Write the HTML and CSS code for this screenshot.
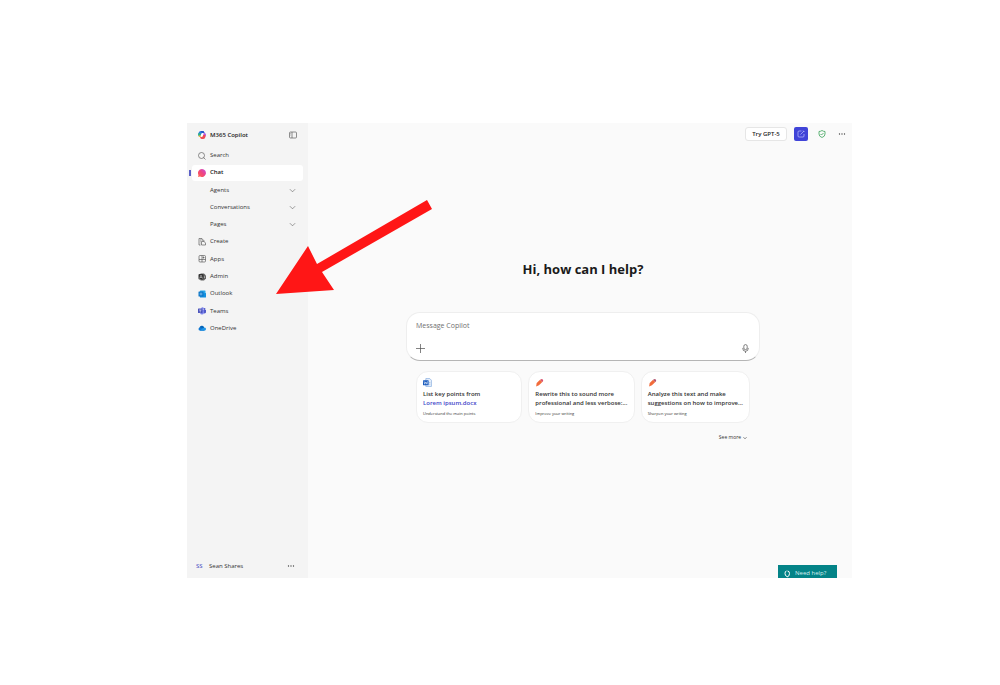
FILE: index.html
```html
<!DOCTYPE html>
<html lang="en">
  <head>
    <meta charset="utf-8">
    <title>M365 Copilot</title>
    <link rel="stylesheet" href="styles.css">
  </head>
  <body>
    <div class="app">
      <aside class="sidebar">
        <div class="brand">
          <svg class="icon" viewBox="0 0 16 16">
            <path d="M1 4q1-4 5-4h4q2 0 3 4H8L6 9H2Q0 8 1 4z" fill="#2a7de1"/>
            <path d="M5 0h5q2 0 3 4H8z" fill="#2453c9"/>
            <path d="M0 7q0-2 1-3l5 1-1 6H3Q0 11 0 7z" fill="#2fb08f"/>
            <path d="M1 9h4l2 3H4Q1 12 1 9z" fill="#f0b43a"/>
            <path d="M11 4h2q4 1 3 5l-2 3-4-1z" fill="#b558d8"/>
            <path d="M14 8q2 3 0 6-1 2-4 2H7q-2 0-3-4h4l2-4z" fill="#ee4b52"/>
            <path d="M7 5h4l-2 6H5z" fill="#fff"/>
          </svg>
          <span class="brand-name">M365 Copilot</span>
          <button class="icon-button" aria-label="Collapse sidebar">
            <svg class="icon line" viewBox="0 0 16 16"><rect x="1" y="2" width="14" height="12" rx="2"/><path d="M6 2v12M3 5h1M3 8h1"/></svg>
          </button>
        </div>
        <nav class="nav">
          <a class="nav-item" href="#">
            <svg class="icon line" viewBox="0 0 16 16"><circle cx="7" cy="7" r="6"/><path d="M11 11l4 4"/></svg>
            <span>Search</span>
          </a>
          <a class="nav-item active" href="#">
            <svg class="icon" viewBox="0 0 16 16">
              <defs><linearGradient id="chat" x1="0" y1="1" x2="1" y2="0"><stop offset="0" stop-color="#ff6a4d"/><stop offset=".5" stop-color="#f0457f"/><stop offset="1" stop-color="#c44be0"/></linearGradient></defs>
              <path d="M8 0a8 8 0 1 1-4 15l-4 1 1-4A8 8 0 0 1 8 0z" fill="url(#chat)"/>
            </svg>
            <span>Chat</span>
          </a>
          <a class="nav-item sub" href="#">
            <span>Agents</span>
            <svg class="chevron line" viewBox="0 0 16 16"><path d="M2 5l6 6 6-6"/></svg>
          </a>
          <a class="nav-item sub" href="#">
            <span>Conversations</span>
            <svg class="chevron line" viewBox="0 0 16 16"><path d="M2 5l6 6 6-6"/></svg>
          </a>
          <a class="nav-item sub" href="#">
            <span>Pages</span>
            <svg class="chevron line" viewBox="0 0 16 16"><path d="M2 5l6 6 6-6"/></svg>
          </a>
          <a class="nav-item" href="#">
            <svg class="icon line" viewBox="0 0 16 16"><path d="M5 14H2V1h6v4M4 4h2M4 7h1M4 10h1"/><path d="M7 7h5l3 3v4H7zM8 4h3l2 3"/></svg>
            <span>Create</span>
          </a>
          <a class="nav-item" href="#">
            <svg class="icon line" viewBox="0 0 16 16"><rect x="2" y="1" width="13" height="13" rx="2"/><path d="M2 9h13M8 1v13M11 3v4M9 5h4"/></svg>
            <span>Apps</span>
          </a>
          <a class="nav-item" href="#">
            <svg class="icon" viewBox="0 0 16 16"><path d="M5 1h7l4 4v6l-4 4H5z" fill="#666"/><rect x="1" y="2" width="10" height="11" rx="2" fill="#333"/><path d="M3 11l3-7 3 7M4 9h4" stroke="#ddd" fill="none"/><circle cx="13" cy="8" r="1" fill="#fff"/></svg>
            <span>Admin</span>
          </a>
          <a class="nav-item" href="#">
            <svg class="icon" viewBox="0 0 16 16"><rect x="4" y="1" width="11" height="10" rx="1" fill="#28a8ea"/><path d="M3 8l13-2v8q0 1-1 1H4z" fill="#1490df"/><rect x="1" y="3" width="10" height="10" rx="1" fill="#0f78c8"/><circle cx="6" cy="8" r="2" fill="none" stroke="#bfe3fa"/></svg>
            <span>Outlook</span>
          </a>
          <a class="nav-item" href="#">
            <svg class="icon" viewBox="0 0 16 16"><circle cx="13" cy="4" r="2" fill="#5059c9"/><circle cx="9" cy="3" r="2.500" fill="#7b83eb"/><path d="M11 6h5v5q-1 2-4 2z" fill="#5059c9"/><path d="M5 6h7v6q-1 3-4 3t-4-3z" fill="#7b83eb"/><rect y="3" width="9" height="9" rx="1" fill="#4b53bc"/><path d="M2 6h5M4.500 6v5" stroke="#fff"/></svg>
            <span>Teams</span>
          </a>
          <a class="nav-item" href="#">
            <svg class="icon" viewBox="0 0 16 16"><path d="M3 7a5 5 0 0 1 9-1l1 7H4z" fill="#0364b8"/><path d="M4 13a3 3 0 0 1 0-6q3 0 5 2l4 4z" fill="#0f78d4"/><path d="M4 13l6-5q6-3 6 2 0 3-3 3z" fill="#1f96e8"/></svg>
            <span>OneDrive</span>
          </a>
        </nav>
        <div class="account">
          <span class="initials">SS</span>
          <span class="account-name">Sean Shares</span>
          <button class="icon-button" aria-label="Account options">
            <svg class="icon dots" viewBox="0 0 16 16"><circle cx="3" cy="8" r="1.300"/><circle cx="8" cy="8" r="1.300"/><circle cx="13" cy="8" r="1.300"/></svg>
          </button>
        </div>
      </aside>

      <main class="main">
        <header class="topbar">
          <button class="try">Try GPT-5</button>
          <button class="new-chat" aria-label="New chat">
            <svg class="icon line" viewBox="0 0 16 16"><path d="M9 2H4Q2 2 2 4v8q0 2 2 2h8q2 0 2-2V8M7 9l7-7M12 1l3 3"/></svg>
          </button>
          <button class="icon-button" aria-label="Protected">
            <svg class="icon shield" viewBox="0 0 16 16"><path d="M8 1q3 2 6 2v5q0 5-6 7-6-2-6-7V3q3 0 6-2z"/><path d="M5 8l2 2 4-4"/></svg>
          </button>
          <button class="icon-button" aria-label="More options">
            <svg class="icon dots" viewBox="0 0 16 16"><circle cx="3" cy="8" r="1.300"/><circle cx="8" cy="8" r="1.300"/><circle cx="13" cy="8" r="1.300"/></svg>
          </button>
        </header>

        <section class="content">
          <h1>Hi, how can I help?</h1>
          <form class="composer">
            <input type="text" placeholder="Message Copilot" aria-label="Message Copilot">
            <div class="composer-tools">
              <button type="button" class="icon-button" aria-label="Add content">
                <svg class="tool line" viewBox="0 0 16 16"><path d="M8 0v16M0 8h16"/></svg>
              </button>
              <button type="button" class="icon-button" aria-label="Dictate">
                <svg class="tool line" viewBox="0 0 16 16"><rect x="5" y="1" width="6" height="9" rx="3"/><path d="M3 7q0 6 5 6t5-6M8 13v3"/></svg>
              </button>
            </div>
          </form>
          <div class="cards">
            <a class="card" href="#">
              <svg class="card-icon" viewBox="0 0 16 16"><path d="M5 1h7l3 3v11H5z" fill="#e8f0fb" stroke="#6d9bd8"/><path d="M11 8h2M11 11h2" stroke="#6d9bd8"/><rect y="4" width="10" height="9" rx="1" fill="#185abd"/><path d="M2 6l1 5 2-4 2 4 1-5" fill="none" stroke="#fff"/></svg>
              <strong>List key points from<br><span class="file">Lorem ipsum.docx</span></strong>
              <small>Understand the main points</small>
            </a>
            <a class="card" href="#">
              <svg class="card-icon" viewBox="0 0 16 16"><path d="M3 9l6-6 4 4-6 6-5 2z" fill="#f26b3a"/><path d="M9 3l2-1q2-1 3 1t0 3l-1 1z" fill="#d9506c"/></svg>
              <strong>Rewrite this to sound more<br>professional and less verbose:...</strong>
              <small>Improve your writing</small>
            </a>
            <a class="card" href="#">
              <svg class="card-icon" viewBox="0 0 16 16"><path d="M3 9l6-6 4 4-6 6-5 2z" fill="#f26b3a"/><path d="M9 3l2-1q2-1 3 1t0 3l-1 1z" fill="#b0506c"/></svg>
              <strong>Analyze this text and make<br>suggestions on how to improve...</strong>
              <small>Sharpen your writing</small>
            </a>
          </div>
          <button class="see-more">See more
            <svg class="line" viewBox="0 0 16 16"><path d="M2 5l6 6 6-6"/></svg>
          </button>
        </section>

        <button class="help">
          <svg class="icon" viewBox="0 0 16 16"><path d="M7 2Q4 2 4 7t4 6M9 2q4 0 4 5 0 6-5 7" fill="none" stroke="#fff" stroke-width="2"/></svg>
          Need help?
        </button>
      </main>

      <svg class="arrow" viewBox="0 0 156 95"><path d="M0 94L32 46l9 18L151 0l5 9L46 72l12 18z"/></svg>
    </div>
  </body>
</html>
```

FILE: styles.css
```css
* {
  box-sizing: border-box;
}
body {
  margin: 0;
  padding: 123px 148px 107px 187px;
  background: #fff;
  color: #333;
  font-family: "Open Sans", "Noto Sans", sans-serif;
  font-size: 6px;
  line-height: 9px;
}
button {
  padding: 0;
  border: 0;
  background: none;
  color: inherit;
  font: inherit;
}
a {
  color: inherit;
  text-decoration: none;
}
svg {
  display: block;
  flex: none;
}
.app {
  position: relative;
  display: flex;
  min-height: calc(100vh - 230px);
}
.icon {
  width: 8px;
  height: 8px;
}
.line {
  fill: none;
  stroke: #555;
  stroke-width: 1.3;
}
.dots {
  fill: #444;
}

/* sidebar */
.sidebar {
  display: flex;
  flex-direction: column;
  flex: none;
  width: 121px;
  padding: 0 5px;
  background: #f4f4f4;
}
.brand,
.account {
  display: flex;
  align-items: center;
  height: 24px;
  padding: 0 6px;
}
.brand-name {
  flex: 1;
  margin-left: 4px;
  color: #222;
  font-weight: 600;
}
.nav {
  display: grid;
  grid-auto-rows: 1fr;
  height: 190px;
}
.nav-item {
  position: relative;
  display: flex;
  align-items: center;
  gap: 4px;
  margin: 1px 0;
  padding: 0 6px;
  border-radius: 3px;
}
.nav-item.sub {
  justify-content: space-between;
  padding: 0 7px 0 18px;
}
.nav-item.active {
  background: #fff;
  color: #222;
  font-weight: 600;
}
.nav-item.active::before {
  content: "";
  position: absolute;
  left: -3px;
  width: 2px;
  height: 6px;
  background: #5b5fc7;
}
.chevron {
  width: 7px;
  height: 7px;
}
.account {
  margin-top: auto;
  padding: 0 8px 0 4px;
}
.initials {
  width: 13px;
  color: #5b5fc7;
  font-weight: 600;
}
.account-name {
  flex: 1;
}

/* main */
.main {
  position: relative;
  flex: 1;
  overflow: hidden;
  padding-left: 6px;
  background: #fafafa;
}
.topbar {
  display: flex;
  align-items: center;
  justify-content: flex-end;
  height: 22px;
  padding-right: 6px;
}
.try {
  width: 42px;
  height: 14px;
  margin-right: 7px;
  border: 1px solid #e6e6e6;
  border-radius: 3px;
  background: #fff;
  color: #222;
  font-weight: 600;
}
.new-chat {
  display: grid;
  place-items: center;
  width: 14px;
  height: 14px;
  margin-right: 10px;
  border-radius: 2px;
  background: #4044d8;
}
.new-chat .line {
  stroke: #c9cbff;
}
.topbar .icon-button + .icon-button {
  margin-left: 12px;
}
.shield {
  fill: none;
  stroke: #2f9e4f;
  stroke-width: 1.5;
}
.content {
  width: 354px;
  max-width: 100%;
  margin: 114px auto 0;
}
h1 {
  margin: 0 0 33px;
  color: #1a1a1a;
  font-size: 13px;
  font-weight: 700;
  line-height: 20px;
  text-align: center;
}
.composer {
  height: 49px;
  padding: 7px 9px;
  border: 1px solid #eee;
  border-bottom-color: #b5b5b5;
  border-radius: 14px;
  background: #fff;
}
.composer input {
  display: block;
  width: 100%;
  height: 10px;
  padding: 0;
  border: 0;
  outline: 0;
  font: inherit;
  font-size: 7px;
}
.composer input::placeholder {
  color: #707070;
}
.composer-tools {
  display: flex;
  justify-content: space-between;
  margin-top: 14px;
}
.tool {
  width: 9px;
  height: 9px;
}
.cards {
  display: grid;
  grid-template-columns: repeat(3, 1fr);
  gap: 6px;
  margin: 10px 10px 0;
}
.card {
  display: flex;
  flex-direction: column;
  height: 52px;
  padding: 6px;
  border: 1px solid #f0f0f0;
  border-radius: 12px;
  background: #fff;
  white-space: nowrap;
}
.card-icon {
  width: 9px;
  height: 9px;
  margin-bottom: 3px;
}
.card strong {
  font-weight: 600;
}
.card .file {
  color: #4044c8;
}
.card small {
  margin-top: 1px;
  font-size: 4px;
}
.see-more {
  display: flex;
  align-items: center;
  gap: 2px;
  margin: 10px 13px 0 auto;
  font-size: 5px;
}
.see-more svg {
  width: 4px;
  height: 4px;
  stroke-width: 3;
}
.help {
  position: absolute;
  right: 15px;
  bottom: 0;
  display: flex;
  align-items: center;
  gap: 4px;
  width: 59px;
  height: 13px;
  padding: 4px 5px 0;
  background: #038387;
  color: #d5f0f0;
}

/* callout arrow over the page */
.arrow {
  position: absolute;
  left: 89px;
  top: 77px;
  width: 156px;
  height: 95px;
  fill: #ff1616;
}
```
